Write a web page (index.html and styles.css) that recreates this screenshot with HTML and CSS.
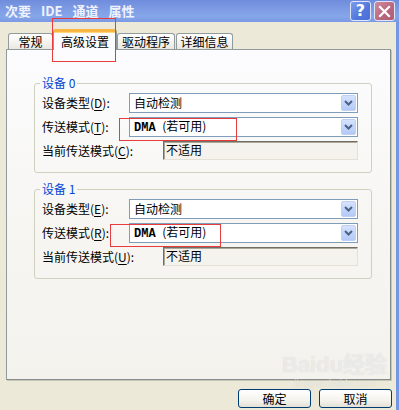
FILE: index.html
```html
<!DOCTYPE html>
<html lang="zh-CN">
<head>
<meta charset="utf-8">
<title>次要 IDE 通道 属性</title>
<link rel="stylesheet" href="styles.css">
</head>
<body>
<div class="window">
  <div class="titlebar">
    <span class="title">次要 IDE 通道 属性</span>
    <div class="caption-btns">
      <span class="cbtn help">?</span>
      <span class="cbtn close"><svg width="13" height="13" viewBox="0 0 13 13"><path d="M2 2 L11 11 M11 2 L2 11" stroke="#fff" stroke-width="2.2" stroke-linecap="square"/></svg></span>
    </div>
  </div>
  <div class="client">
    <div class="tabs">
      <div class="tab t1">常规</div>
      <div class="tab t2 active">高级设置</div>
      <div class="tab t3">驱动程序</div>
      <div class="tab t4">详细信息</div>
    </div>
    <div class="panel">
      <fieldset class="group">
        <legend>设备 0</legend>
        <div class="row">
          <span class="lbl">设备类型(<u>D</u>):</span>
          <div class="combo"><span class="val">自动检测</span><span class="drop"><svg width="9" height="6" viewBox="0 0 9 6"><path d="M1 1 L4.5 4.5 L8 1" fill="none" stroke="#4d6185" stroke-width="2"/></svg></span></div>
        </div>
        <div class="row">
          <span class="lbl">传送模式(<u>T</u>):</span>
          <div class="combo"><span class="val"><b class="mono">DMA</b> (若可用)</span><span class="drop"><svg width="9" height="6" viewBox="0 0 9 6"><path d="M1 1 L4.5 4.5 L8 1" fill="none" stroke="#4d6185" stroke-width="2"/></svg></span></div>
        </div>
        <div class="row last">
          <span class="lbl wide">当前传送模式(<u>C</u>):</span>
          <div class="readonly">不适用</div>
        </div>
      </fieldset>
      <fieldset class="group">
        <legend>设备 1</legend>
        <div class="row">
          <span class="lbl">设备类型(<u>E</u>):</span>
          <div class="combo"><span class="val">自动检测</span><span class="drop"><svg width="9" height="6" viewBox="0 0 9 6"><path d="M1 1 L4.5 4.5 L8 1" fill="none" stroke="#4d6185" stroke-width="2"/></svg></span></div>
        </div>
        <div class="row">
          <span class="lbl">传送模式(<u>R</u>):</span>
          <div class="combo"><span class="val"><b class="mono">DMA</b> (若可用)</span><span class="drop"><svg width="9" height="6" viewBox="0 0 9 6"><path d="M1 1 L4.5 4.5 L8 1" fill="none" stroke="#4d6185" stroke-width="2"/></svg></span></div>
        </div>
        <div class="row last">
          <span class="lbl wide">当前传送模式(<u>U</u>):</span>
          <div class="readonly">不适用</div>
        </div>
      </fieldset>
    </div>
    <div class="buttons">
      <button class="btn">确定</button>
      <button class="btn">取消</button>
    </div>
  </div>
  <div class="watermark"><span class="wm-main">Baidu经验</span><span class="wm-sub">jingyan.baidu.com</span></div>
  <div class="annot a-tab"></div>
  <div class="annot a-mode0"></div>
  <div class="annot a-mode1"></div>
</div>
</body>
</html>
```
FILE: styles.css
```css
* { box-sizing: border-box; }
html, body { margin: 0; padding: 0; }
body {
  background: #ece9d8;
  font-family: "Noto Sans CJK SC", "Noto Sans", sans-serif;
  font-size: 12px;
  color: #000;
}
.window {
  position: relative;
  width: 399px;
  height: 410px;
  display: flex;
  flex-direction: column;
  overflow: hidden;
}
.titlebar {
  height: 22px;
  flex: none;
  display: flex;
  align-items: center;
  justify-content: space-between;
  background: linear-gradient(#6f8cdc, #7e9de4 45%, #86a6ea 75%, #7a99e2);
  padding: 0 4px 0 5px;
}
.title {
  color: #eef2fc;
  font-weight: bold;
  font-size: 13px;
  word-spacing: 7px;
  line-height: 22px;
}
.caption-btns { display: flex; gap: 3px; }
.cbtn {
  width: 21px;
  height: 20px;
  border: 1px solid #dfe6fa;
  border-radius: 3px;
  display: flex;
  align-items: center;
  justify-content: center;
  color: #fff;
  font-family: "DejaVu Sans", sans-serif;
  font-weight: bold;
  font-size: 16px;
  line-height: 1;
}
.help { background: linear-gradient(135deg, #7d9ceb, #5176dc 60%, #4a6fd6); }
.close { background: linear-gradient(135deg, #d089a0, #b8687d 60%, #ad5e72); }
.client {
  flex: 1;
  display: flex;
  flex-direction: column;
  border-right: 3px solid #7596e2;
}
.tabs {
  display: flex;
  align-items: flex-end;
  height: 20px;
  margin-top: 7px;
  padding-left: 8px;
}
.tab {
  height: 16px;
  border: 1px solid #919b9c;
  border-bottom: none;
  border-radius: 3px 3px 0 0;
  background: linear-gradient(#ffffff, #f3f2ee 60%, #e8e7e0);
  display: flex;
  align-items: center;
  justify-content: center;
  line-height: 14px;
  font-size: 12px;
}
.t1 { width: 45px; }
.t2 { width: 64px; }
.t3 { width: 58px; }
.t4 { width: 57px; margin-left: 1px; }
.tab.active {
  position: relative;
  z-index: 1;
  height: 21px;
  margin-bottom: -1px;
  background: #fcfcfe;
  border-top: 3px solid #f8b645;
  box-shadow: inset 0 1px 0 #ffd77a;
  padding-top: 1px;
}
.panel {
  margin-left: 6px;
  width: 385px;
  height: 331px;
  border: 1px solid #919b9c;
  border-right-color: #868c8c;
  border-bottom-color: #868c8c;
  box-shadow: 1px 1px 0 #c9c6b6;
  background: linear-gradient(#fcfcfe, #f7f6f3 50%, #f3f2ed);
  padding: 25px 18px 0 27px;
}
.group {
  margin: 0 0 8px 0;
  border: 1px solid #d0d0bf;
  border-radius: 3px;
  padding: 2px 12px 12px 7px;
  min-width: 0;
}
.group legend {
  color: #0046d5;
  font-size: 12px;
  line-height: 16px;
  padding: 0 2px;
  margin-left: -2px;
}
.row {
  display: flex;
  align-items: center;
  height: 20px;
  margin-bottom: 4px;
}
.row.last { height: 19px; margin-bottom: 0; }
.lbl {
  flex: none;
  width: 87px;
  white-space: nowrap;
  line-height: 16px;
}
.lbl.wide { width: 121px; }
.lbl u { text-underline-offset: 2px; }
.combo {
  width: 229px;
  height: 20px;
  border: 1px solid #7f9db9;
  background: #fff;
  display: flex;
  align-items: center;
  justify-content: space-between;
  padding: 1px;
}
.val { padding-left: 3px; white-space: nowrap; line-height: 16px; }
.mono { font-family: "Liberation Mono", monospace; font-weight: bold; font-size: 12px; margin-right: 4px; }
.drop {
  width: 15px;
  height: 16px;
  border: 1px solid #bcd0f8;
  border-radius: 2px;
  background: linear-gradient(#d6e3fe, #c3d5fb 50%, #b4c9f6);
  display: flex;
  align-items: center;
  justify-content: center;
}
.readonly {
  width: 195px;
  height: 19px;
  border: 1px solid;
  border-color: #716f64 #e4e2d6 #e4e2d6 #716f64;
  box-shadow: inset 1px 1px 0 #aca899;
  background: #f4f3ee;
  padding-left: 2px;
  line-height: 16px;
}
.buttons {
  display: flex;
  justify-content: flex-end;
  gap: 8px;
  margin-top: 9px;
  padding-right: 4px;
}
.btn {
  width: 73px;
  height: 19px;
  border: 1px solid #003c74;
  border-radius: 3px;
  background: linear-gradient(#ffffff, #f4f3ee 60%, #e3e0d4);
  font-family: "Noto Sans CJK SC", sans-serif;
  font-size: 12px;
  line-height: 15px;
  padding: 0;
  color: #000;
}
.watermark {
  position: absolute;
  left: 282px;
  top: 352px;
  display: flex;
  flex-direction: column;
  align-items: center;
  pointer-events: none;
}
.wm-main {
  font-family: "Liberation Sans", "Noto Sans CJK SC", sans-serif;
  font-weight: bold;
  font-size: 22px;
  line-height: 26px;
  color: rgba(255, 255, 255, 0.55);
  text-shadow: 0 0 1px rgba(150, 150, 150, 0.35);
}
.wm-sub {
  font-family: "Liberation Sans", sans-serif;
  font-size: 10px;
  line-height: 12px;
  color: rgba(255, 255, 255, 0.5);
  text-shadow: 0 0 1px rgba(150, 150, 150, 0.3);
}
.annot {
  position: absolute;
  border: 1px solid #e83c3c;
  pointer-events: none;
  z-index: 5;
}
.a-tab { left: 52px; top: 18px; width: 64px; height: 44px; }
.a-mode0 { left: 119px; top: 118px; width: 118px; height: 23px; }
.a-mode1 { left: 110px; top: 224px; width: 111px; height: 23px; }
```
